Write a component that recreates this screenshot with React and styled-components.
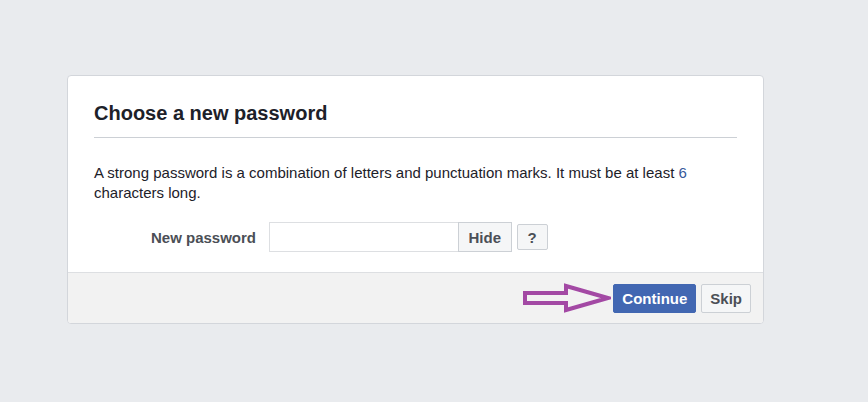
import React, { useState } from 'react';
import styled, { createGlobalStyle } from 'styled-components';

const GlobalStyle = createGlobalStyle`
  html, body {
    margin: 0;
    padding: 0;
    background: #e9ebee;
    font-family: "Liberation Sans", Arial, Helvetica, sans-serif;
  }
`;

const Page = styled.div`
  width: 868px;
  height: 402px;
  padding: 75px 0 0 67px;
  box-sizing: border-box;
`;

const Card = styled.div`
  width: 697px;
  background: #fff;
  border: 1px solid #d3d6db;
  border-radius: 4px;
  overflow: hidden;
  box-sizing: border-box;
`;

const Header = styled.div`
  margin: 0 26px;
  padding: 25px 0 12px;
  border-bottom: 1px solid #ccd0d5;
`;

const Title = styled.h2`
  margin: 0;
  font-size: 20px;
  font-weight: bold;
  line-height: 24px;
  color: #1d2129;
`;

const Body = styled.div`
  padding: 25px 26px 20px;
`;

const Text = styled.p`
  margin: 0;
  font-size: 15px;
  line-height: 20px;
  color: #1d2129;
`;

const Num = styled.span`
  color: #365899;
`;

const FieldRow = styled.div`
  display: flex;
  align-items: center;
  margin-top: 19px;
`;

const Label = styled.label`
  width: 162px;
  text-align: right;
  padding-right: 13px;
  font-size: 15px;
  font-weight: bold;
  color: #4b4f56;
`;

const Input = styled.input`
  width: 189px;
  height: 30px;
  box-sizing: border-box;
  border: 1px solid #dddfe2;
  border-right: none;
  padding: 3px 6px;
  font-size: 14px;
  outline: none;
`;

const GreyButton = styled.button`
  height: ${p => p.$h || 30}px;
  padding: 0 ${p => p.$px || 10}px;
  margin-left: ${p => p.$ml || 0}px;
  border: 1px solid #ccd0d5;
  border-radius: ${p => p.$radius || 0}px;
  background: #f5f6f7;
  color: #4b4f56;
  font-family: inherit;
  font-size: 15px;
  font-weight: bold;
  cursor: pointer;
`;

const Footer = styled.div`
  display: flex;
  justify-content: flex-end;
  align-items: center;
  gap: 5px;
  height: 50px;
  padding: 0 12px 0 0;
  background: #f2f2f2;
  border-top: 1px solid #dddfe2;
`;

const Arrow = styled.svg`
  display: block;
  margin-right: -3px;
`;

const BlueButton = styled.button`
  height: 29px;
  padding: 0 8px;
  border: 1px solid #4267b2;
  border-radius: 2px;
  background: #4267b2;
  color: #fff;
  font-family: inherit;
  font-size: 15px;
  font-weight: bold;
  cursor: pointer;
`;

const App = () => {
  const [show, setShow] = useState(true);

  return (
    <Page>
      <GlobalStyle />
      <Card>
        <Header>
          <Title>Choose a new password</Title>
        </Header>
        <Body>
          <Text>
            A strong password is a combination of letters and punctuation marks. It must be at least <Num>6</Num> characters long.
          </Text>
          <FieldRow>
            <Label htmlFor="pw">New password</Label>
            <Input id="pw" type={show ? 'text' : 'password'} />
            <GreyButton $px={9.5} onClick={() => setShow(!show)}>Hide</GreyButton>
            <GreyButton $h={26} $px={10} $ml={5} $radius={2}>?</GreyButton>
          </FieldRow>
        </Body>
        <Footer>
          <Arrow width="88" height="30" viewBox="0 0 88 30">
            <path
              d="M2 10 H43 V3 L85 15 L43 27 V20 H2 Z"
              fill="none"
              stroke="#a349a4"
              strokeWidth="4"
              strokeLinejoin="miter"
            />
          </Arrow>
          <BlueButton>Continue</BlueButton>
          <GreyButton $h={29} $px={8} $radius={2}>Skip</GreyButton>
        </Footer>
      </Card>
    </Page>
  );
};

export default App;
